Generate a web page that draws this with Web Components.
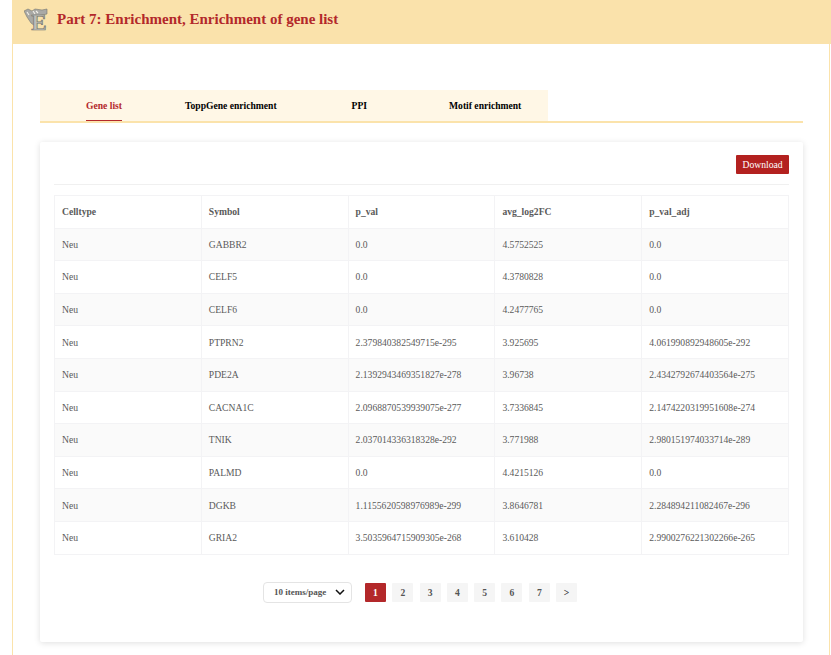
<!DOCTYPE html>
<html>
<head>
<meta charset="utf-8">
<title>Enrichment</title>
<style>
    html, body { margin: 0; padding: 0; background: #fff; }
    body { font-family: "Liberation Serif", serif; height: 655px; overflow: hidden; }
</style>
</head>
<body>
<app-page>
    <app-header slot="header">Part 7: Enrichment, Enrichment of gene list</app-header>
    <tab-bar>
        <tab-item active>Gene list</tab-item>
        <tab-item style="margin-left:63px">ToppGene enrichment</tab-item>
        <tab-item style="margin-left:75px">PPI</tab-item>
        <tab-item style="margin-left:82px">Motif enrichment</tab-item>
    </tab-bar>
    <result-card>
        <red-button slot="actions">Download</red-button>
        <gene-table></gene-table>
        <page-nav></page-nav>
    </result-card>
</app-page>

<script>
class AppPage extends HTMLElement {
    constructor() {
        super();
        this.attachShadow({ mode: "open" }).innerHTML = `
        <style>
            :host {
                display: block;
                box-sizing: border-box;
                height: 655px;
                margin-left: 12px;
                margin-right: 1px;
                border-left: 1px solid #fbe3ab;
                border-right: 1px solid #fbe3ab;
            }
            .head { margin: 0 -2px 0 -1px; }
            .body { padding: 46px 26px 0 27px; }
        </style>
        <div class="head"><slot name="header"></slot></div>
        <div class="body"><slot></slot></div>
        `;
    }
}
customElements.define("app-page", AppPage);

class AppHeader extends HTMLElement {
    constructor() {
        super();
        this.attachShadow({ mode: "open" }).innerHTML = `
        <style>
            :host {
                display: flex;
                align-items: center;
                gap: 8px;
                box-sizing: border-box;
                height: 44px;
                padding: 0 0 6px 12px;
                background: #fae2ab;
                color: #b3282a;
                font: bold 15px "Liberation Serif", serif;
            }
            svg { display: block; flex: none; }
        </style>
        <svg width="25" height="32" viewBox="0 0 25 32">
            <path d="M0 8 L4 6 L8 8 L11 6 L18 7 L23 6 L23 11 L13 13 L11 23 L7 20 L3 14 Z" fill="#a9a9a6" stroke="#77776f" stroke-width=".6"/>
            <path d="M9 8 L11 11 M12 8 L14 10 M3 9 L5 12" stroke="#f4f1ea" stroke-width="1.1"/>
            <text x="15" y="27" text-anchor="middle" font-family="Liberation Serif" font-weight="bold" font-size="23" fill="#bdbdb9" stroke="#77776f" stroke-width=".7">E</text>
        </svg>
        <slot></slot>
        `;
    }
}
customElements.define("app-header", AppHeader);

class TabBar extends HTMLElement {
    constructor() {
        super();
        this.attachShadow({ mode: "open" }).innerHTML = `
        <style>
            :host {
                display: block;
                border-bottom: 2px solid #fbe3ab;
            }
            .tabs {
                display: flex;
                box-sizing: border-box;
                width: 508px;
                height: 31px;
                padding-left: 46px;
                background: #fff7e6;
            }
        </style>
        <div class="tabs"><slot></slot></div>
        `;
    }
}
customElements.define("tab-bar", TabBar);

class TabItem extends HTMLElement {
    constructor() {
        super();
        this.attachShadow({ mode: "open" }).innerHTML = `
        <style>
            :host {
                display: block;
                flex: none;
                box-sizing: border-box;
                height: 31px;
                white-space: nowrap;
                font: bold 9.6px/31px "Liberation Serif", serif;
                color: #000;
            }
            :host([active]) {
                width: 36px;
                text-align: center;
                color: #b3282a;
                border-bottom: 1.5px solid #b3282a;
            }
        </style>
        <slot></slot>
        `;
    }
}
customElements.define("tab-item", TabItem);

class ResultCard extends HTMLElement {
    constructor() {
        super();
        this.attachShadow({ mode: "open" }).innerHTML = `
        <style>
            :host {
                display: block;
                box-sizing: border-box;
                height: 500px;
                margin-top: 19px;
                padding: 13px 14px 0;
                background: #fff;
                border-radius: 2px;
                box-shadow: 0 1px 6px rgba(0, 0, 0, .13);
            }
            .actions {
                display: flex;
                justify-content: flex-end;
                height: 29px;
                margin-bottom: 10px;
                border-bottom: 1px solid #f0f0f0;
            }
        </style>
        <div class="actions"><slot name="actions"></slot></div>
        <slot></slot>
        `;
    }
}
customElements.define("result-card", ResultCard);

class RedButton extends HTMLElement {
    constructor() {
        super();
        this.attachShadow({ mode: "open" }).innerHTML = `
        <style>
            :host {
                display: block;
                box-sizing: border-box;
                width: 53px;
                height: 19px;
                text-align: center;
                background: #b3211f;
                border-radius: 1px;
                color: #fff;
                font: 9.6px/19px "Liberation Serif", serif;
            }
        </style>
        <slot></slot>
        `;
    }
}
customElements.define("red-button", RedButton);

const geneRows = [
    ["Neu", "GABBR2", "0.0", "4.5752525", "0.0"],
    ["Neu", "CELF5", "0.0", "4.3780828", "0.0"],
    ["Neu", "CELF6", "0.0", "4.2477765", "0.0"],
    ["Neu", "PTPRN2", "2.379840382549715e-295", "3.925695", "4.061990892948605e-292"],
    ["Neu", "PDE2A", "2.1392943469351827e-278", "3.96738", "2.4342792674403564e-275"],
    ["Neu", "CACNA1C", "2.0968870539939075e-277", "3.7336845", "2.1474220319951608e-274"],
    ["Neu", "TNIK", "2.037014336318328e-292", "3.771988", "2.980151974033714e-289"],
    ["Neu", "PALMD", "0.0", "4.4215126", "0.0"],
    ["Neu", "DGKB", "1.1155620598976989e-299", "3.8646781", "2.284894211082467e-296"],
    ["Neu", "GRIA2", "3.5035964715909305e-268", "3.610428", "2.9900276221302266e-265"]
];

class GeneTable extends HTMLElement {
    constructor() {
        super();
        const head = ["Celltype", "Symbol", "p_val", "avg_log2FC", "p_val_adj"];
        const th = head.map(h => `<div class="c h">${h}</div>`).join("");
        const rows = geneRows.map(r => r.map(v => `<div class="c">${v}</div>`).join("")).join("");
        this.attachShadow({ mode: "open" }).innerHTML = `
        <style>
            :host {
                display: block;
                font: 9.6px "Liberation Serif", serif;
                color: #5a5a5a;
            }
            .grid {
                display: grid;
                grid-template-columns: repeat(5, 146.8px);
                grid-auto-rows: 32.6px;
                border-top: 1px solid #f3f3f5;
                border-left: 1px solid #f3f3f5;
            }
            .c {
                display: flex;
                align-items: center;
                padding-left: 7px;
                border-right: 1px solid #f3f3f5;
                border-bottom: 1px solid #f3f3f5;
                box-sizing: border-box;
            }
            .h { font-weight: bold; background: #fff; }
            .c:nth-child(10n+6), .c:nth-child(10n+7), .c:nth-child(10n+8), .c:nth-child(10n+9), .c:nth-child(10n+10) { background: #fafafa; }
        </style>
        <div class="grid">${th}${rows}</div>
        `;
    }
}
customElements.define("gene-table", GeneTable);

class PageNav extends HTMLElement {
    constructor() {
        super();
        const pages = ["1", "2", "3", "4", "5", "6", "7", "&gt;"];
        this.attachShadow({ mode: "open" }).innerHTML = `
        <style>
            :host {
                display: flex;
                align-items: center;
                margin-top: 27px;
                margin-left: 209px;
                font: bold 9.6px "Liberation Serif", serif;
                color: #555;
            }
            .select {
                display: flex;
                align-items: center;
                justify-content: space-between;
                box-sizing: border-box;
                width: 89px;
                height: 21px;
                padding: 0 6px 0 10px;
                margin-right: 13px;
                border: 1px solid #e4e4e4;
                border-radius: 4px;
                font-size: 9px;
            }
            .select svg { display: block; }
            .pages { display: flex; gap: 6.3px; }
            .p {
                width: 21px;
                height: 19px;
                line-height: 19px;
                text-align: center;
                background: #f5f5f5;
                border-radius: 1px;
            }
            .p:last-child { color: #333; }
            .p.on { background: #b3282a; color: #fff; }
        </style>
        <div class="select">
            <span>10 items/page</span>
            <svg width="10" height="6" viewBox="0 0 10 6"><path d="M1 1 L5 5 L9 1" fill="none" stroke="#111" stroke-width="1.5"/></svg>
        </div>
        <div class="pages">${pages.map((p, i) => `<div class="p${i === 0 ? " on" : ""}">${p}</div>`).join("")}</div>
        `;
    }
}
customElements.define("page-nav", PageNav);
</script>
</body>
</html>
